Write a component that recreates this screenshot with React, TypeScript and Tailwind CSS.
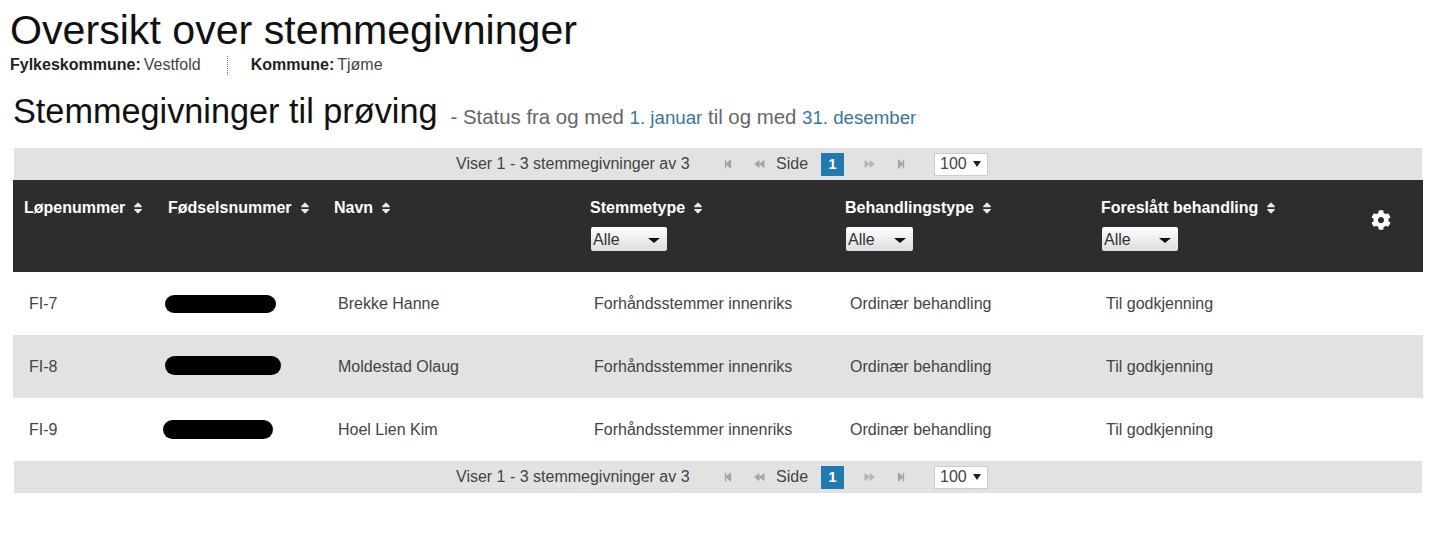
import { FaBackward, FaCog, FaForward, FaSort, FaStepBackward, FaStepForward } from 'react-icons/fa'

const rows = [
  { id: 'FI-7', name: 'Brekke Hanne', redact: 'ml-[8px] mt-px h-[18px] w-[111px]' },
  { id: 'FI-8', name: 'Moldestad Olaug', redact: 'ml-[8px] mb-[2px] h-[19px] w-[116px]' },
  { id: 'FI-9', name: 'Hoel Lien Kim', redact: 'ml-[6px] h-[19px] w-[110px]' },
]

const gridCols = 'grid grid-cols-[144px_166px_256px_255px_256px_256px_1fr]'

function Pager() {
  return (
    <div className="ml-px mr-px flex h-[32px] items-center bg-[#e2e2e2] pl-[442px] text-[16px] text-[#444]">
      <span className="w-[267px]">Viser 1 - 3 stemmegivninger av 3</span>
      <FaStepBackward className="h-[10px] w-[10px] text-[#a5a5a5]" />
      <FaBackward className="ml-[21px] h-[10px] w-[11px] text-[#a5a5a5]" />
      <span className="ml-[11px] w-[45px]">Side</span>
      <span className="flex h-[23px] w-[23px] items-center justify-center bg-[#1f7ab0] text-[15px] font-bold text-white">
        1
      </span>
      <FaForward className="ml-[20px] h-[10px] w-[11px] text-[#b5b5b5]" />
      <FaStepForward className="ml-[21px] h-[10px] w-[10px] text-[#a5a5a5]" />
      <span className="ml-[28px] flex h-[23px] w-[54px] items-center justify-between border border-[#ccc] bg-white pl-[5px] pr-[6px] text-[16px]">
        100
        <span className="border-x-[4px] border-t-[6px] border-x-transparent border-t-[#222]" />
      </span>
    </div>
  )
}

function HeaderCell({ label, filter, width }: { label: string; filter?: boolean; width?: string }) {
  return (
    <div className="pl-[11px] pt-[19px]">
      <div className="flex h-[18px] items-center text-[16px] font-bold text-white">
        {label}
        <FaSort className="ml-[8px] h-[14px] w-[10px] text-[#e8e8e8]" />
      </div>
      {filter && (
        <div
          className={`ml-px mt-[10px] flex h-[24px] items-center justify-between rounded-[2px] bg-linear-to-b from-white to-[#dcdcdc] pl-[2px] pr-[7px] pt-[2px] text-[16px] text-[#333] ${width}`}
        >
          Alle
          <span className="border-x-[6px] border-t-[5px] border-x-transparent border-t-[#111]" />
        </div>
      )}
    </div>
  )
}

export default function App() {
  return (
    <div className="min-h-[542px] bg-white font-['Liberation_Sans',Arial,sans-serif]">
      <div className="pl-[10px] pt-[6px]">
        <h1 className="text-[41.15px] leading-[48px] text-[#111]">Oversikt over stemmegivninger</h1>
        <div className="flex h-[22px] items-center text-[16px] text-[#444]">
          <span className="font-bold text-[#222]">Fylkeskommune:</span>
          <span className="ml-[3px]">Vestfold</span>
          <span className="ml-[26px] h-[19px] border-l border-dotted border-[#777]" />
          <span className="ml-[23px] font-bold text-[#222]">Kommune:</span>
          <span className="ml-[3px]">Tjøme</span>
        </div>
      </div>

      <div className="mt-[9px] flex h-[53px] items-center pl-[13px]">
        <h2 className="text-[34.25px] text-[#111]">Stemmegivninger til prøving</h2>
        <span className="ml-[13px] pt-[11px] text-[20.4px] text-[#666]">
          - Status fra og med <span className="text-[18.7px] text-[#35789f]">1. januar</span> til og med{' '}
          <span className="text-[18.7px] text-[#35789f]">31. desember</span>
        </span>
      </div>

      <div className="ml-[13px] mt-[10px] w-[1410px]">
        <Pager />

        <div className={`${gridCols} h-[92px] bg-[#2d2d2d]`}>
          <HeaderCell label="Løpenummer" />
          <HeaderCell label="Fødselsnummer" />
          <HeaderCell label="Navn" />
          <HeaderCell label="Stemmetype" filter width="w-[76px]" />
          <HeaderCell label="Behandlingstype" filter width="w-[67px]" />
          <HeaderCell label="Foreslått behandling" filter width="w-[76px]" />
          <div className="flex items-center justify-end pb-[13px] pr-[32px]">
            <FaCog className="h-[20px] w-[20px] text-white" />
          </div>
        </div>

        {rows.map((row, i) => (
          <div
            key={row.id}
            className={`${gridCols} h-[63px] items-center text-[16px] text-[#444] ${i === 1 ? 'bg-[#e2e2e2]' : 'bg-white'}`}
          >
            <div className="pl-[16px]">{row.id}</div>
            <div>
              <div className={`rounded-full bg-black ${row.redact}`} />
            </div>
            <div className="pl-[15px]">{row.name}</div>
            <div className="pl-[15px]">Forhåndsstemmer innenriks</div>
            <div className="pl-[16px]">Ordinær behandling</div>
            <div className="pl-[16px]">Til godkjenning</div>
            <div />
          </div>
        ))}

        <Pager />
      </div>
    </div>
  )
}
